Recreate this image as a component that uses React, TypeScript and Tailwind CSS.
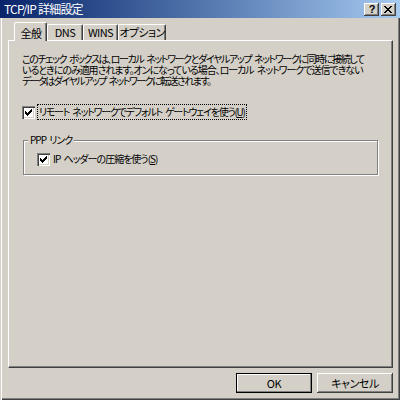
import React from "react";

const raised =
  "bg-[#d4d0c8] shadow-[inset_-1px_-1px_0_#404040,inset_1px_1px_0_#fff,inset_-2px_-2px_0_#808080]";

function Check() {
  return (
    <div className="w-[13px] h-[13px] bg-white shadow-[inset_1px_1px_0_#808080,inset_2px_2px_0_#404040,inset_-1px_-1px_0_#fff,inset_-2px_-2px_0_#d4d0c8] flex items-center justify-center shrink-0">
      <svg width="7" height="7" viewBox="0 0 7 7" shapeRendering="crispEdges">
        <path
          d="M6 0h1v1h-1z M5 1h2v1h-2z M0 2h1v1h-1z M4 2h3v1h-3z M0 3h2v1h-2z M3 3h3v1h-3z M0 4h5v1h-5z M1 5h3v1h-3z M2 6h1v1h-1z"
          fill="#000"
        />
      </svg>
    </div>
  );
}

const tab =
  "h-[16px] whitespace-nowrap rounded-t-[2px] border-t border-l border-r border-t-white border-l-white border-r-[#404040] shadow-[inset_-1px_0_0_#808080] flex items-center justify-center";

export default function App() {
  return (
    <div className="w-[400px] h-[400px] bg-[#d4d0c8] overflow-hidden flex flex-col text-black [font-family:'Noto_Sans_CJK_JP',sans-serif] [font-feature-settings:'palt'] shadow-[inset_1px_0_0_#d4d0c8,inset_2px_0_0_#fff,inset_-1px_-1px_0_#404040,inset_-2px_-2px_0_#808080]">
      {/* Title bar */}
      <div className="h-[18px] shrink-0 flex items-center bg-gradient-to-r from-[#0a246a] to-[#a6caf0] pl-[4px] pr-[4px]">
        <span className="text-white text-[12px] leading-[12px] tracking-[-0.8px] whitespace-nowrap">TCP/IP 詳細設定</span>
        <div className="ml-auto flex gap-[2px]">
          <div className={`w-[15px] h-[13px] ${raised} flex items-center justify-center`}>
            <span className="[font-family:'Liberation_Sans',sans-serif] font-bold text-[11px] leading-[11px] pl-px">?</span>
          </div>
          <div className={`w-[15px] h-[13px] ${raised} flex items-center justify-center`}>
            <svg width="8" height="7" viewBox="0 0 8 7" shapeRendering="crispEdges" className="ml-[-1px]">
              <path
                d="M0 0h2v1h-2z M6 0h2v1h-2z M1 1h2v1h-2z M5 1h2v1h-2z M2 2h4v1h-4z M3 3h2v1h-2z M2 4h4v1h-4z M1 5h2v1h-2z M5 5h2v1h-2z M0 6h2v1h-2z M6 6h2v1h-2z"
                fill="#000"
              />
            </svg>
          </div>
        </div>
      </div>

      <div className="flex flex-col pl-[8px] pr-[7px] text-[10px] tracking-[-1px] [word-spacing:2px]">
        {/* Tabs */}
        <div className="mt-[4px] h-[18px] flex items-end pl-[6px] text-[11px] tracking-[-0.6px]">
          <div className="relative z-10 w-[33px] h-[19px] -mb-px bg-[#d4d0c8] rounded-t-[2px] border-t border-l border-r border-t-white border-l-white border-r-[#404040] shadow-[inset_-1px_0_0_#808080] flex items-start justify-center pt-[2px] pl-[1px] whitespace-nowrap">
            全般
          </div>
          <div className={`w-[36px] ${tab}`}>DNS</div>
          <div className={`w-[35px] ${tab}`}>WINS</div>
          <div className={`w-[48px] ${tab}`}>オプション</div>
        </div>

        {/* Panel */}
        <div className="h-[328px] border border-t-white border-l-white border-r-[#404040] border-b-[#404040] shadow-[inset_-1px_-1px_0_#808080] pl-[13px] pt-[12px]">
          <div className="leading-[11px] whitespace-nowrap">
            <div className="tracking-[-1.4px]">このチェック ボックスは、ローカル ネットワークとダイヤルアップ ネットワークに同時に接続して</div>
            <div className="tracking-[-1.05px]">いるときにのみ適用されます。オンになっている場合、ローカル ネットワークで送信できない</div>
            <div className="tracking-[-1.55px]">データはダイヤルアップ ネットワークに転送されます。</div>
          </div>

          <div className="mt-[18px] h-[16px] flex items-center">
            <Check />
            <div className="ml-[2px] h-[16px] px-[1px] border border-dotted border-black flex items-center leading-[12px] whitespace-nowrap tracking-[-1.25px]">
              リモート ネットワークでデフォルト ゲートウェイを使う(<span className="underline">U</span>)
            </div>
          </div>

          <div className="relative mt-[20px] ml-[1px] w-[355px] h-[35px] border border-[#808080] shadow-[inset_1px_1px_0_#fff,1px_1px_0_#fff]">
            <div className="absolute left-[4px] top-[-7px] px-[2px] bg-[#d4d0c8] leading-[12px] whitespace-nowrap">PPP リンク</div>
            <div className="mt-[11px] ml-[13px] flex items-center h-[14px]">
              <Check />
              <div className="ml-[3px] leading-[12px] whitespace-nowrap">
                IP ヘッダーの圧縮を使う(<span className="underline">S</span>)
              </div>
            </div>
          </div>
        </div>

        {/* Buttons */}
        <div className="mt-[5px] flex justify-end gap-[5px] text-[11px] tracking-[-0.4px]">
          <div className="w-[76px] h-[20px] border border-black bg-[#d4d0c8] shadow-[inset_-1px_-1px_0_#808080,inset_1px_1px_0_#fff] flex items-center justify-center">
            OK
          </div>
          <div className="w-[76px] h-[20px] bg-[#d4d0c8] shadow-[inset_-1px_-1px_0_#404040,inset_1px_1px_0_#fff,inset_-2px_-2px_0_#808080] flex items-center justify-center">
            キャンセル
          </div>
        </div>
      </div>
    </div>
  );
}
